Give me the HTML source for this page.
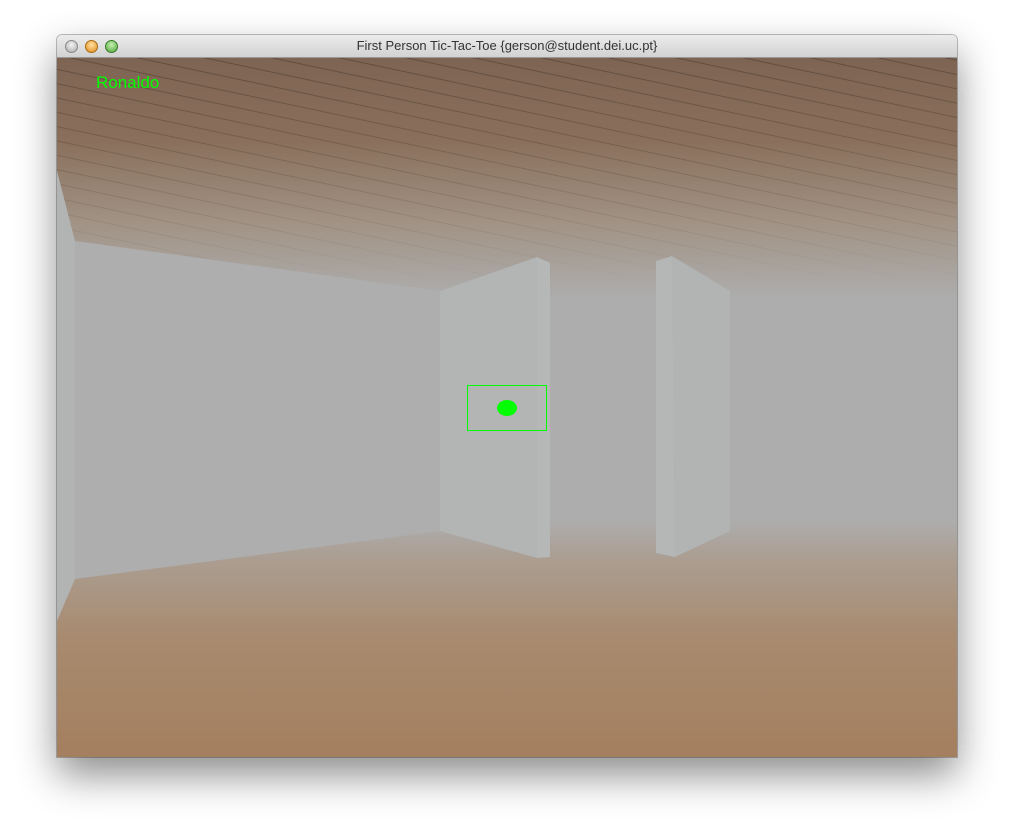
<!DOCTYPE html>
<html><head><meta charset="utf-8"><style>
html,body{margin:0;padding:0;background:#fff;width:1014px;height:836px;overflow:hidden;font-family:"Liberation Sans",sans-serif}
.win{position:absolute;left:57px;top:35px;width:900px;height:722px;box-shadow:0 18px 40px rgba(0,0,0,.45),0 0 0 1px rgba(0,0,0,.25);border-radius:5px 5px 0 0;overflow:hidden}
.tb{height:22px;background:linear-gradient(#ececec,#d2d2d2);border-bottom:1px solid #999;position:relative;font-size:13px;color:#333;text-align:center;line-height:22px}
.b{position:absolute;top:5px;width:11px;height:11px;border-radius:50%}
</style></head><body>
<div class="win">
<div class="tb">First Person Tic-Tac-Toe {gerson@student.dei.uc.pt}
<div class="b" style="left:8px;background:radial-gradient(circle at 50% 35%,#f4f4f4,#a8a8a8);border:1px solid #888"></div>
<div class="b" style="left:28px;background:radial-gradient(circle at 50% 35%,#ffe0a0,#e08a1a);border:1px solid #a86a10"></div>
<div class="b" style="left:48px;background:radial-gradient(circle at 50% 35%,#c8f0b0,#4aa33a);border:1px solid #3a7a2a"></div>
</div>
<svg width="900" height="700" viewBox="57 57 900 700" style="display:block">
<defs>
<linearGradient id="ceil" x1="0" y1="0" x2="0" y2="1">
<stop offset="0" stop-color="#7e6452"/><stop offset="0.35" stop-color="#8a705c"/><stop offset="0.7" stop-color="#a29486"/><stop offset="1" stop-color="#adadad"/></linearGradient>
<linearGradient id="floor" x1="0" y1="0" x2="0" y2="1">
<stop offset="0" stop-color="#adadad"/><stop offset="0.15" stop-color="#ab9e92"/><stop offset="0.5" stop-color="#a88a6e"/><stop offset="1" stop-color="#a47f5f"/></linearGradient>
<linearGradient id="fade" x1="0" y1="0" x2="0" y2="1"><stop offset="0" stop-color="#fff"/><stop offset="1" stop-color="#000"/></linearGradient>
<mask id="m"><rect x="57" y="57" width="900" height="220" fill="url(#fade)"/></mask>
<pattern id="wood" width="60" height="14" patternUnits="userSpaceOnUse" patternTransform="rotate(12)">
<line x1="0" y1="13" x2="60" y2="13" stroke="#3a2a20" stroke-opacity=".4"/></pattern>
</defs>
<rect x="57" y="57" width="900" height="700" fill="#adadad"/>
<rect x="57" y="57" width="900" height="240" fill="url(#ceil)"/>
<rect x="57" y="57" width="900" height="220" fill="url(#wood)" mask="url(#m)"/>
<rect x="57" y="520" width="900" height="237" fill="url(#floor)"/>
<polygon points="57,170 75,240 75,578 57,620" fill="#b2b3b3"/>
<polygon points="75,240 440,290 440,530 75,578" fill="#aeaeae"/>
<polygon points="440,290 537,256 537,557 440,530" fill="#b3b4b4"/>
<polygon points="537,256 550,262 550,556 537,557" fill="#b6b8b8"/>
<polygon points="656,260 672,255 675,556 656,552" fill="#b5b7b7"/>
<polygon points="672,255 730,290 730,530 675,556" fill="#b2b3b3"/>
<rect x="467.5" y="384.5" width="79" height="45" fill="none" stroke="#00ff00" stroke-width="1"/>
<ellipse cx="507" cy="407" rx="10" ry="8" fill="#00ff00"/>
<text x="96" y="87" font-family="Liberation Sans, sans-serif" font-size="17" fill="#00ff00">Ronaldo</text>
</svg>
</div>
</body></html>
